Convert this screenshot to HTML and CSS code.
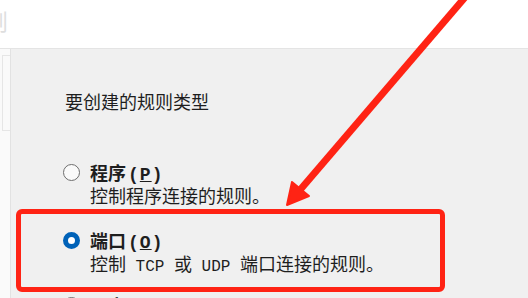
FILE: index.html
```html
<!DOCTYPE html>
<html lang="zh-CN">
<head>
  <meta charset="UTF-8">
  <meta name="viewport" content="width=device-width, initial-scale=1.0">
  <title>新建入站规则向导</title>
  <link rel="stylesheet" href="styles.css">
</head>
<body>
  <div class="window">
    <div class="header"><span class="title">则</span></div>
    <div class="main">
      <div class="side"><div class="side-item"></div></div>
      <div class="content">
        <p class="heading">要创建的规则类型</p>

        <div class="option">
          <span class="radio"></span>
          <div class="option-text">
            <div class="label">程序<span class="key">(<u>P</u>)</span></div>
            <div class="desc">控制程序连接的规则。</div>
          </div>
        </div>

        <!-- 标记的选项 -->
        <div class="option marked">
          <span class="radio checked"></span>
          <div class="option-text">
            <div class="label">端口<span class="key">(<u>O</u>)</span></div>
            <div class="desc">控制<span class="mono"> TCP </span>或<span class="mono"> UDP </span>端口连接的规则。</div>
          </div>
        </div>

        <div class="option last">
          <span class="radio"></span>
          <div class="option-text">
            <div class="label">预定义<span class="key">(<u>E</u>)</span></div>
            <div class="desc">控制 Windows 体验功能连接的规则。</div>
          </div>
        </div>
      </div>
    </div>

    <svg class="arrow" width="528" height="298" viewBox="0 0 528 298">
      <line x1="467" y1="-5" x2="300" y2="190" stroke="#ff2314" stroke-width="7"/>
      <polygon points="287,205 309,196 292,182" fill="#ff2314" stroke="#ff2314" stroke-width="2" stroke-linejoin="round"/>
    </svg>
  </div>
</body>
</html>
```

FILE: styles.css
```css
body {
  margin: 0;
  font-family: "Noto Sans CJK SC", sans-serif;
  color: #1e1e1e;
  background: #fff;
}

.window {
  position: relative;
  height: 298px;
  overflow: hidden;
}

.header {
  height: 48px;
  background: #fff;
  border-bottom: 1px solid #e4e4e4;
}

.header .title {
  display: inline-block;
  margin: 4px 0 0 -14px;
  font-size: 22px;
  color: #dedede;
}

.main {
  display: flex;
  height: 249px;
}

.side {
  width: 10px;
  background: #fafafa;
  border-right: 1px solid #e2e2e2;
  padding-top: 6px;
}

.side-item {
  height: 74px;
  margin-left: 2px;
  border: 1px solid #e6e6e6;
  border-right: none;
}

.content {
  flex: 1;
  background: #f0f0f0;
  padding-top: 40px;
}

.heading {
  margin: 0 0 0 54px;
  font-size: 18px;
  line-height: 24px;
}

.option {
  display: flex;
  gap: 10px;
  padding-left: 52px;
  margin-top: 48px;
}

.radio {
  flex: none;
  width: 17px;
  height: 17px;
  margin-top: 3px;
  box-sizing: border-box;
  border: 1.5px solid #6e6e6e;
  border-radius: 50%;
  background: #fafafa;
}

.radio.checked {
  border: 5px solid #0062b8;
  background: #fff;
}

.label,
.desc {
  height: 23px;
  font-size: 18px;
  line-height: 23px;
  white-space: nowrap;
}

.label {
  font-weight: bold;
}

.key {
  font-family: "Liberation Mono", monospace;
  letter-spacing: 1px;
  margin-left: 2px;
  line-height: 1;
}

.mono {
  font-family: "Liberation Mono", monospace;
  font-size: 16px;
  line-height: 1;
  white-space: pre;
}

.option.marked {
  width: 429px;
  box-sizing: border-box;
  margin: 2px 0 0 5px;
  padding: 15px 0 12px 42px;
  border: 5px solid #ff2314;
  border-radius: 6px;
}

.option.last {
  margin-top: 2px;
}

.arrow {
  position: absolute;
  top: 0;
  left: 0;
  pointer-events: none;
}
```
